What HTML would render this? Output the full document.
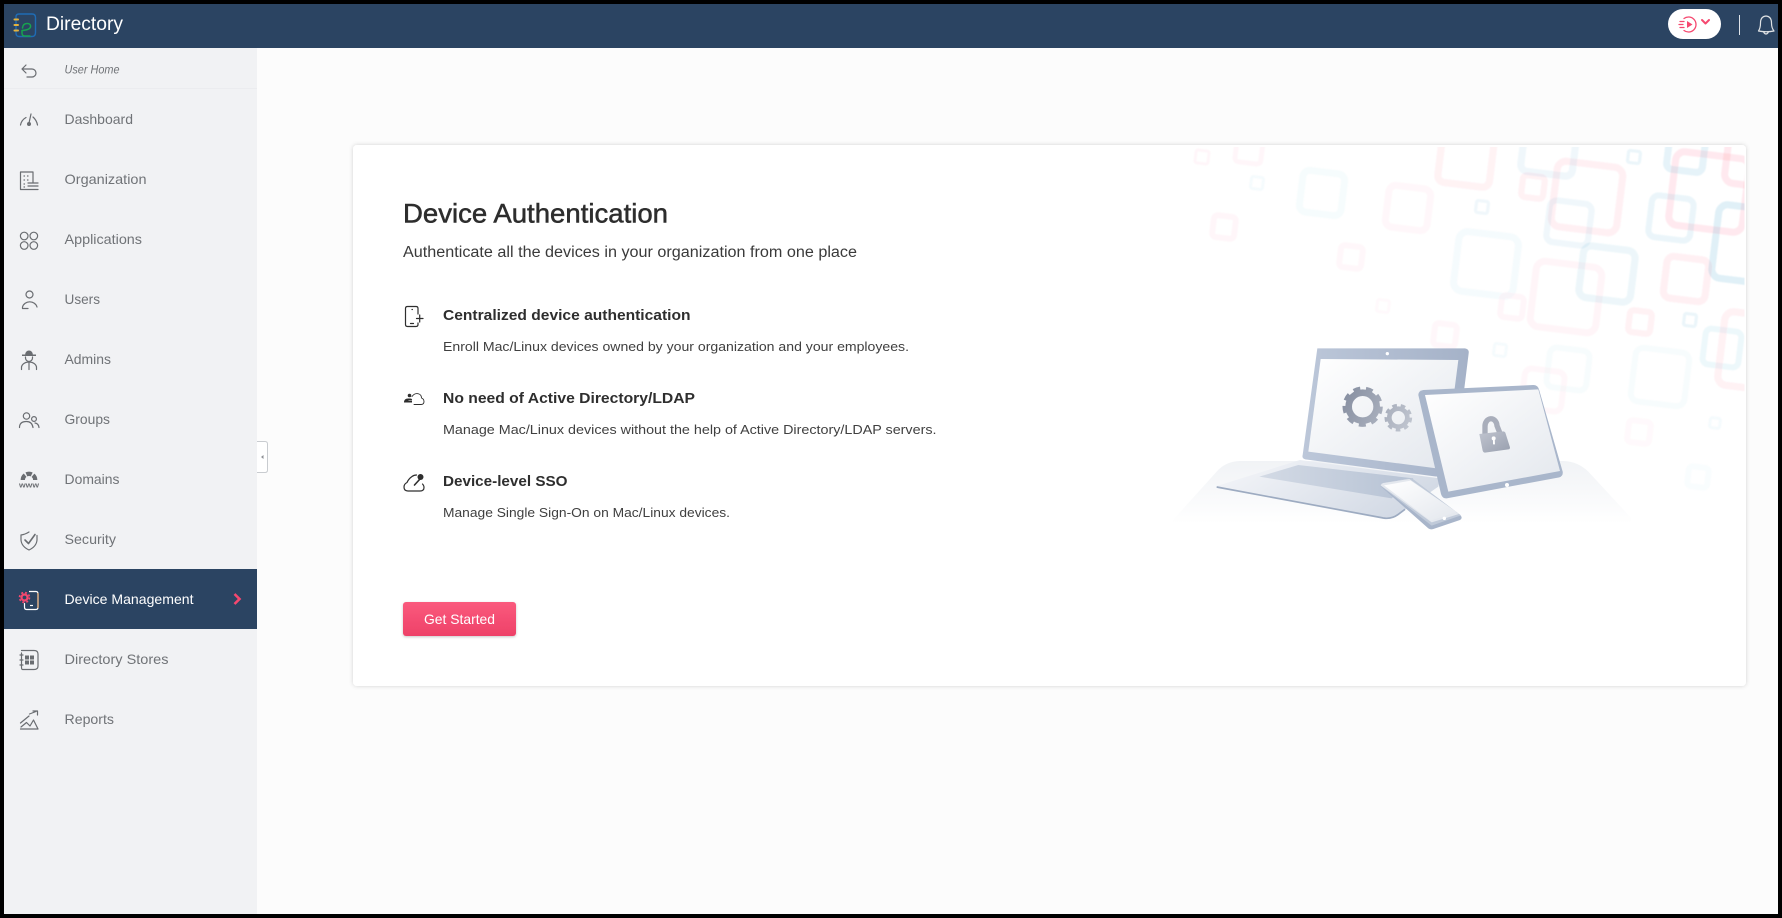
<!DOCTYPE html>
<html><head><meta charset="utf-8"><title>Directory</title>
<style>
html,body{margin:0;padding:0;width:1782px;height:918px;overflow:hidden;background:#000}
svg{position:absolute;left:0;top:0;display:block}
text{font-family:"Liberation Sans",sans-serif}
.n{font-size:14px;fill:#707377}
.i{fill:none;stroke:#6a6d71;stroke-width:1.2;stroke-linecap:round;stroke-linejoin:round}
.f{fill:#6a6d71;stroke:none}
.d{fill:none;stroke:#2e2e2e;stroke-width:1.2;stroke-linecap:round;stroke-linejoin:round}
.t{font-size:15px;font-weight:bold;fill:#2e2e2e}
.s{font-size:13px;fill:#404040}
</style></head>
<body>
<svg width="1782" height="918" viewBox="0 0 1782 918" xmlns="http://www.w3.org/2000/svg">
<defs>
<filter id="sh" x="-2%" y="-3%" width="104%" height="106%"><feDropShadow dx="0" dy="0" stdDeviation="2" flood-color="#000" flood-opacity=".17"/></filter>
<filter id="bs" x="-5%" y="-20%" width="110%" height="150%"><feDropShadow dx="0" dy="1" stdDeviation="1.2" flood-color="#000" flood-opacity=".22"/></filter>
<filter id="soft" filterUnits="userSpaceOnUse" x="1100" y="140" width="660" height="560"><feGaussianBlur stdDeviation=".6"/></filter>
<filter id="soft2" filterUnits="userSpaceOnUse" x="0" y="0" width="1600" height="700"><feGaussianBlur stdDeviation="1"/></filter>
<clipPath id="cc"><rect x="1100" y="147" width="644.500" height="530"/></clipPath>
<linearGradient id="btn" x1="0" y1="0" x2="0" y2="1"><stop offset="0" stop-color="#fa5a7d"/><stop offset="1" stop-color="#ee4168"/></linearGradient>
<linearGradient id="plat" x1="0" y1="0" x2="0" y2="1"><stop offset="0" stop-color="#f1f3f6"/><stop offset="1" stop-color="#fff"/></linearGradient>
<linearGradient id="base" x1="0" y1="0" x2="1" y2=".4"><stop offset="0" stop-color="#f6f7fa"/><stop offset="1" stop-color="#d3dae5"/></linearGradient>
<linearGradient id="kb" x1="0" y1="0" x2="1" y2="0"><stop offset="0" stop-color="#d3dae5"/><stop offset="1" stop-color="#b6c2d4"/></linearGradient>
<linearGradient id="lid" x1="0" y1="0" x2="1" y2="0"><stop offset="0" stop-color="#bcc7d9"/><stop offset="1" stop-color="#a5b2c8"/></linearGradient>
<linearGradient id="scr" x1="0" y1="0" x2="1" y2="1"><stop offset="0" stop-color="#fff"/><stop offset="1" stop-color="#e3e7ed"/></linearGradient>
<linearGradient id="gear" gradientUnits="userSpaceOnUse" x1="550" y1="190" x2="760" y2="300"><stop offset="0" stop-color="#868ea0"/><stop offset="1" stop-color="#c4c9d3"/></linearGradient>
<linearGradient id="lock" x1="0" y1="0" x2="1" y2="1"><stop offset="0" stop-color="#c0c4cf"/><stop offset="1" stop-color="#989fae"/></linearGradient>
</defs>

<!-- page -->
<rect x="4" y="4" width="1774" height="910" fill="#fcfcfc"/>
<rect x="4" y="48" width="253" height="866" fill="#f1f2f4"/>
<rect x="4" y="88" width="253" height="1" fill="#ebecef"/>
<rect x="4" y="569" width="253" height="60" fill="#2b4462"/>
<rect x="4" y="4" width="1774" height="44" fill="#2b4462"/>

<!-- logo -->
<g fill="none" stroke-linecap="round" stroke-linejoin="round">
<path d="M16 17 Q16 14 19 14 H32 Q35.500 14 35.500 17.500 V32.500 Q35.500 36.500 32 36.500 H19 Q16 36.500 16 33 Z" stroke="#1f6cb5" stroke-width="1.400"/>
<path d="M14.500 19.500 H18 M14.500 25 H18 M14.500 30.500 H18" stroke="#e3b23d" stroke-width="2"/>
<path d="M22.500 28 Q23 23.500 27 23.500 Q31 23.500 30.500 27 Q29.500 30 22 30.500 V33 Q22 36 25 36 H30" stroke="#17a34f" stroke-width="1.500"/>
</g>
<text x="46" y="30" font-size="19" fill="#fff" textLength="77" lengthAdjust="spacingAndGlyphs">Directory</text>

<!-- header right -->
<rect x="1668" y="9" width="53" height="30" rx="15" fill="#fff"/>
<g fill="none" stroke="#f5486f" stroke-width="1.300" stroke-linecap="round" stroke-linejoin="round">
<path d="M1684 18.500 A7.500 7.500 0 1 1 1684 30.500"/>
<path d="M1680 21.500 H1684 M1679 24.500 H1683 M1680 27.500 H1684"/>
<path d="M1702 20 L1705.500 23.500 L1709 20" stroke-width="2"/>
</g>
<path d="M1687 21 L1692.500 24.500 L1687 28 Z" fill="#f5486f"/>
<rect x="1739" y="15" width="1" height="20" fill="#dfe4ea"/>
<path d="M1758.500 31 Q1760.500 28 1760.500 23 Q1760.500 16.500 1766 16 Q1771.500 16.500 1771.500 23 Q1771.500 28 1774 31 Q1766.500 32.500 1758.500 31 Z M1763.500 32 Q1766 36 1768.500 32" fill="none" stroke="#dfe2e4" stroke-width="1.200" stroke-linejoin="round"/>

<!-- sidebar icons -->
<g class="i">
<path d="M26 65 L22 69 L26 73 M22 69 H32 A4 4 0 0 1 32 77 H27"/>
<path d="M20.500 125 Q21.500 120 26 117.500 M33 117 Q36.500 120 37.500 125 M29 123 L31 114"/>
<path d="M33 172 H20.500 V189.500 H38 M33 172 V183 M28 183 H38 M28 186 H38" />
<path d="M24 176 h.5 M27.500 176 h.5 M24 180 h.5 M27.500 180 h.5 M24 184 h.5 M24 187 h.5"/>
<circle cx="24.200" cy="236" r="3.800"/><circle cx="33.800" cy="236" r="3.800"/><circle cx="24.200" cy="245.500" r="3.800"/><circle cx="33.800" cy="245.500" r="3.800"/>
<circle cx="29.500" cy="294.500" r="3.500"/><path d="M28 308.500 H22.500 V307 A7.500 7 0 0 1 37 307"/>
<path d="M25.500 357 V358 A3.500 3.500 0 0 0 32.500 358 V357 M21.500 369.500 V367.500 A7.500 5.500 0 0 1 36.500 367.500 V369.500 M29 363 V369.500"/>
<circle cx="26.500" cy="416" r="3.200"/><circle cx="34" cy="419" r="2.400"/><path d="M19.500 427.500 Q19.500 421.500 26.500 421.500 Q32 421.500 33 427.500 M35 423 Q38.500 423.500 39 427.500"/>
<path d="M29 532 Q25 534.500 21 535 V540 Q21.500 546.500 29 550 Q36.500 546.500 37 540 V535.500"/>
<path d="M25 540 L28.500 543.500 L35 534.500" stroke-width="1.600"/>
<path d="M21.500 650.500 H34 Q38 650.500 38 654 V666 Q38 669.500 34 669.500 H22.500 Q21.500 669.500 21.500 667 V653 M20 655 H23 M20 660 H23 M20 665 H23"/>
<path d="M20.500 723 L29 716 M29.500 714 L36 711.500 M33 711 H37.500 V715 M20.500 729 H38 L33.500 720 L30 726 L26.500 722.500 L21 727"/>
</g>
<circle cx="29" cy="124" r="2" class="f"/>
<path class="f" d="M25.200 354.500 A3.800 4 0 0 1 32.800 354.500 H36 V356 H22 V354.500 Z"/>
<path d="M22.800 480 A6.200 6.200 0 0 1 35.200 480" fill="none" stroke="#6a6d71" stroke-width="4.300" stroke-dasharray="5.500 1.500 5.500 1.500 5.500"/>
<text x="19" y="487.500" font-size="7" font-weight="bold" fill="#6a6d71" textLength="20" lengthAdjust="spacingAndGlyphs">www</text>
<rect x="25" y="655.500" width="4" height="4" class="f"/><rect x="30" y="655.500" width="4" height="4" class="f"/><rect x="25" y="660.500" width="4" height="4" class="f"/><rect x="30" y="660.500" width="4" height="4" class="f"/>

<!-- active icon -->
<path d="M29 591.500 H36 Q38 591.500 38 594 V607 Q38 609.500 36 609.500 H26.500 Q24.500 609.500 24.500 607 V603" fill="none" stroke="#fff" stroke-width="1.200"/>
<path d="M38 593 V608" stroke="#f0b37c" stroke-width="1.200"/>
<path d="M30 605.500 H33" stroke="#fff" stroke-width="1.200"/>
<circle cx="24.500" cy="597.500" r="3" fill="none" stroke="#f5486f" stroke-width="2.200"/>
<circle cx="24.500" cy="597.500" r="5" fill="none" stroke="#f5486f" stroke-width="1.600" stroke-dasharray="2 2"/>
<path d="M234.500 594 L239.500 599 L234.500 604" fill="none" stroke="#f5486f" stroke-width="2.600"/>

<!-- sidebar text -->
<text x="64.500" y="73.700" font-size="11.500" font-style="italic" fill="#6f7276" textLength="55" lengthAdjust="spacingAndGlyphs">User Home</text>
<text class="n" x="64.500" y="124" textLength="68.500" lengthAdjust="spacingAndGlyphs">Dashboard</text>
<text class="n" x="64.500" y="184" textLength="82" lengthAdjust="spacingAndGlyphs">Organization</text>
<text class="n" x="64.500" y="244" textLength="77.500" lengthAdjust="spacingAndGlyphs">Applications</text>
<text class="n" x="64.500" y="304" textLength="35.500" lengthAdjust="spacingAndGlyphs">Users</text>
<text class="n" x="64.500" y="364" textLength="46.500" lengthAdjust="spacingAndGlyphs">Admins</text>
<text class="n" x="64.500" y="424" textLength="45.500" lengthAdjust="spacingAndGlyphs">Groups</text>
<text class="n" x="64.500" y="484" textLength="55" lengthAdjust="spacingAndGlyphs">Domains</text>
<text class="n" x="64.500" y="544" textLength="51.500" lengthAdjust="spacingAndGlyphs">Security</text>
<text class="n" x="64.500" y="604" textLength="129" lengthAdjust="spacingAndGlyphs" style="fill:#fff">Device Management</text>
<text class="n" x="64.500" y="664" textLength="104" lengthAdjust="spacingAndGlyphs">Directory Stores</text>
<text class="n" x="64.500" y="724" textLength="49.500" lengthAdjust="spacingAndGlyphs">Reports</text>

<!-- collapse handle -->
<path d="M257 441.500 H265 Q267.500 441.500 267.500 444 V470 Q267.500 472.500 265 472.500 H257" fill="#fff" stroke="#c9ccd0"/>
<path d="M261 457 L263.500 455 V459 Z" fill="#8d9095"/>

<!-- card -->
<rect x="353" y="145" width="1393" height="541" rx="4" fill="#fff" filter="url(#sh)"/>

<!-- background squares -->
<g clip-path="url(#cc)"><g fill="none" filter="url(#soft)">
<g stroke="#ff3c64">
<rect x="-6.500" y="-6.500" width="13" height="13" rx="2" transform="translate(1202 157) rotate(7)" stroke-width="3" stroke-opacity=".035"/>
<rect x="-13" y="-13" width="26" height="26" rx="4" transform="translate(1249 150) rotate(7)" stroke-width="5" stroke-opacity=".035"/>
<rect x="-21" y="-21" width="42" height="42" rx="7" transform="translate(1408 208) rotate(7)" stroke-width="7" stroke-opacity=".03"/>
<rect x="-11" y="-11" width="22" height="22" rx="4" transform="translate(1224 227) rotate(7)" stroke-width="6" stroke-opacity=".035"/>
<rect x="-26" y="-26" width="52" height="52" rx="7" transform="translate(1466 159) rotate(7)" stroke-width="7" stroke-opacity=".065"/>
<rect x="-11" y="-11" width="22" height="22" rx="4" transform="translate(1533 187) rotate(7)" stroke-width="6" stroke-opacity=".07"/>
<rect x="-11" y="-11" width="22" height="22" rx="4" transform="translate(1351 257) rotate(7)" stroke-width="6" stroke-opacity=".03"/>
<rect x="-33" y="-33" width="66" height="66" rx="9" transform="translate(1587 197) rotate(7)" stroke-width="7" stroke-opacity=".08"/>
<rect x="-37" y="-37" width="74" height="74" rx="9" transform="translate(1709 192) rotate(7)" stroke-width="7" stroke-opacity=".11"/>
<rect x="-29" y="-29" width="58" height="58" rx="9" transform="translate(1756 157) rotate(7)" stroke-width="7" stroke-opacity=".11"/>
<rect x="-33" y="-33" width="66" height="66" rx="9" transform="translate(1566 297) rotate(7)" stroke-width="7" stroke-opacity=".04"/>
<rect x="-21" y="-21" width="42" height="42" rx="7" transform="translate(1686 279) rotate(7)" stroke-width="7" stroke-opacity=".08"/>
<rect x="-11" y="-11" width="22" height="22" rx="4" transform="translate(1512 307) rotate(7)" stroke-width="6" stroke-opacity=".035"/>
<rect x="-11" y="-11" width="22" height="22" rx="4" transform="translate(1640 322) rotate(7)" stroke-width="6" stroke-opacity=".07"/>
<rect x="-6" y="-6" width="12" height="12" rx="2" transform="translate(1383 306) rotate(7)" stroke-width="3" stroke-opacity=".025"/>
<rect x="-11" y="-11" width="22" height="22" rx="4" transform="translate(1445 335) rotate(7)" stroke-width="6" stroke-opacity=".03"/>
<rect x="-37" y="-37" width="74" height="74" rx="9" transform="translate(1758 352) rotate(7)" stroke-width="7" stroke-opacity=".07"/>
<rect x="-20" y="-20" width="40" height="40" rx="7" transform="translate(1543 390) rotate(7)" stroke-width="6" stroke-opacity=".03"/>
<rect x="-11" y="-11" width="22" height="22" rx="4" transform="translate(1639 432) rotate(7)" stroke-width="6" stroke-opacity=".025"/>
</g>
<g stroke="#2f9ccc">
<rect x="-6" y="-6" width="12" height="12" rx="2" transform="translate(1257 183) rotate(7)" stroke-width="3" stroke-opacity=".04"/>
<rect x="-21" y="-21" width="42" height="42" rx="7" transform="translate(1322 193) rotate(7)" stroke-width="7" stroke-opacity=".035"/>
<rect x="-6" y="-6" width="12" height="12" rx="2" transform="translate(1482 207) rotate(7)" stroke-width="3" stroke-opacity=".08"/>
<rect x="-30" y="-30" width="60" height="60" rx="9" transform="translate(1486 264) rotate(7)" stroke-width="7" stroke-opacity=".04"/>
<rect x="-21" y="-21" width="42" height="42" rx="7" transform="translate(1569 223) rotate(7)" stroke-width="6" stroke-opacity=".08"/>
<rect x="-26" y="-26" width="52" height="52" rx="7" transform="translate(1549 148) rotate(7)" stroke-width="7" stroke-opacity=".08"/>
<rect x="-6" y="-6" width="12" height="12" rx="2" transform="translate(1634 157) rotate(7)" stroke-width="3" stroke-opacity=".1"/>
<rect x="-18" y="-18" width="36" height="36" rx="6" transform="translate(1686 153) rotate(7)" stroke-width="7" stroke-opacity=".12"/>
<rect x="-21" y="-21" width="42" height="42" rx="7" transform="translate(1671 218) rotate(7)" stroke-width="6" stroke-opacity=".1"/>
<rect x="-37" y="-37" width="74" height="74" rx="9" transform="translate(1752 245) rotate(7)" stroke-width="7" stroke-opacity=".15"/>
<rect x="-26" y="-26" width="52" height="52" rx="8" transform="translate(1607 274) rotate(7)" stroke-width="7" stroke-opacity=".09"/>
<rect x="-6" y="-6" width="12" height="12" rx="2" transform="translate(1690 320) rotate(7)" stroke-width="3" stroke-opacity=".1"/>
<rect x="-6" y="-6" width="12" height="12" rx="2" transform="translate(1500 350) rotate(7)" stroke-width="3" stroke-opacity=".04"/>
<rect x="-18" y="-18" width="36" height="36" rx="6" transform="translate(1722 348) rotate(7)" stroke-width="6" stroke-opacity=".07"/>
<rect x="-20" y="-20" width="40" height="40" rx="7" transform="translate(1568 369) rotate(7)" stroke-width="6" stroke-opacity=".03"/>
<rect x="-27" y="-27" width="54" height="54" rx="8" transform="translate(1660 377) rotate(7)" stroke-width="6" stroke-opacity=".03"/>
<rect x="-5" y="-5" width="10" height="10" rx="2" transform="translate(1715 423) rotate(7)" stroke-width="3" stroke-opacity=".04"/>
<rect x="-10" y="-10" width="20" height="20" rx="4" transform="translate(1698 477) rotate(7)" stroke-width="6" stroke-opacity=".025"/>
</g>
</g></g>

<!-- illustration -->
<g transform="translate(1160 330) scale(.33333)"><g filter="url(#soft2)">
<path d="M30 580 L170 425 Q195 395 240 393 H1210 Q1255 395 1285 425 L1410 560 Q1420 580 1400 580 Z" fill="url(#plat)"/>
<path d="M168 470 Q170 467 180 465 L420 390 L840 445 L835 470 L715 553 Q690 570 665 562 L175 475 Z" fill="url(#base)"/>
<path d="M170 471 L670 564 Q695 568 715 553 L735 538" fill="none" stroke="#9dabc1" stroke-width="5"/>
<path d="M298 440 L415 405 L760 445 L695 505 Z" fill="url(#kb)"/>
<path d="M472 55 H915 Q928 57 926 70 L895 320 L830 440 L436 388 Q425 385 428 375 Z" fill="url(#lid)"/>
<path d="M482 87 L895 90 L868 300 L830 415 L445 365 Z" fill="url(#scr)"/>
<circle cx="682" cy="71" r="5" fill="#fff"/>
<g fill="none" stroke="url(#gear)">
<circle cx="608" cy="230" r="42" stroke-width="20"/>
<circle cx="608" cy="230" r="55" stroke-width="11" stroke-dasharray="21 17.400"/>
<circle cx="715" cy="263" r="27" stroke-width="14"/>
<circle cx="715" cy="263" r="37" stroke-width="9" stroke-dasharray="14 11.800"/>
</g>
<path d="M775 195 Q775 182 790 180 L1120 165 Q1133 165 1137 178 L1208 425 Q1210 438 1198 442 L860 505 Q847 506 843 492 Z" fill="#a9b6cb"/>
<path d="M795 195 L1135 178 L1200 423 L865 485 Z" fill="url(#scr)"/>
<circle cx="1041" cy="465" r="6" fill="#fff"/>
<path d="M975 312 V290 A17 21 0 0 1 1011 287 L1020 310" fill="none" stroke="#a9aebb" stroke-width="16"/>
<path d="M958 312 L1030 304 Q1034 304 1036 308 L1050 352 Q1050 358 1045 358 L975 368 Q970 368 968 362 Z" fill="url(#lock)"/>
<circle cx="1001" cy="325" r="6" fill="#fff"/><path d="M999 325 H1004 L1005 343 H999 Z" fill="#fff"/>
<path d="M660 467 Q660 460 668 458 L745 445 Q755 444 762 450 L903 558 Q908 565 900 570 L820 597 Q812 600 805 595 Z" fill="#a8b5ca"/>
<path d="M660 466 Q660 460 668 458 L745 445 Q755 444 762 450 L903 556 L815 587 Z" fill="#c0cad9"/>
<path d="M662 466 Q664 461 670 459 L748 447 L897 552 L815 577 Z" fill="#e4e8ee"/>
<path d="M672 466 L752 452 L890 546 L812 572 Z" fill="url(#scr)"/>
<circle cx="853" cy="565" r="5" fill="#fff"/>
</g></g>

<!-- card text -->
<text x="403" y="222.700" font-size="26.500" fill="#2d2d2d" stroke="#2d2d2d" stroke-width=".5" textLength="265" lengthAdjust="spacingAndGlyphs">Device Authentication</text>
<text x="403" y="257" font-size="15.500" fill="#3a3a3a" textLength="454" lengthAdjust="spacingAndGlyphs">Authenticate all the devices in your organization from one place</text>

<text class="t" x="443" y="320" textLength="247.500" lengthAdjust="spacingAndGlyphs">Centralized device authentication</text>
<text class="s" x="443" y="351.200" textLength="466" lengthAdjust="spacingAndGlyphs">Enroll Mac/Linux devices owned by your organization and your employees.</text>
<text class="t" x="443" y="403" textLength="252" lengthAdjust="spacingAndGlyphs">No need of Active Directory/LDAP</text>
<text class="s" x="443" y="434.200" textLength="493.500" lengthAdjust="spacingAndGlyphs">Manage Mac/Linux devices without the help of Active Directory/LDAP servers.</text>
<text class="t" x="443" y="486" textLength="124.500" lengthAdjust="spacingAndGlyphs">Device-level SSO</text>
<text class="s" x="443" y="517.200" textLength="287" lengthAdjust="spacingAndGlyphs">Manage Single Sign-On on Mac/Linux devices.</text>

<!-- item icons -->
<g class="d">
<path d="M418 314 V308.500 Q418 306.500 416 306.500 H407.500 Q405.500 306.500 405.500 308.500 V324.500 Q405.500 326.500 407.500 326.500 H416 Q418 326.500 418 324.500 V323"/>
<path d="M412 309.500 h.4 M410.500 323.500 H413.500 M416.500 318.500 H423 M419.700 315 V322"/>
<path d="M412 396.500 Q415 392.500 419 394 Q421.500 395 421.500 398 Q424 399 424 401.500 Q424 404.500 421 404.500 H414" stroke-width=".9"/>
<path d="M407 482.500 Q404 484 404 487 Q404 491 408 491 H420 Q424 491 424 487.500 Q424 485.500 422.500 484 M407 482.500 Q408.500 479 412 476.500 Q414 475 416.500 475"/>
<path d="M420 479 L414.500 485" stroke-width="1.600"/>
</g>
<circle cx="409.500" cy="395.500" r="1.800" fill="#2e2e2e"/>
<path d="M404 402.500 Q404 398.500 408 398.500 H410 Q412.500 398.500 412 400.500 H408.500 V401 H412 V402.500 Z" fill="#2e2e2e"/>
<circle cx="420.500" cy="477" r="3" fill="#2e2e2e"/>

<!-- button -->
<rect x="403" y="602" width="113" height="34" rx="3" fill="url(#btn)" filter="url(#bs)"/>
<text x="424" y="624" font-size="14" fill="#fff" textLength="71" lengthAdjust="spacingAndGlyphs">Get Started</text>
</svg>
</body></html>
